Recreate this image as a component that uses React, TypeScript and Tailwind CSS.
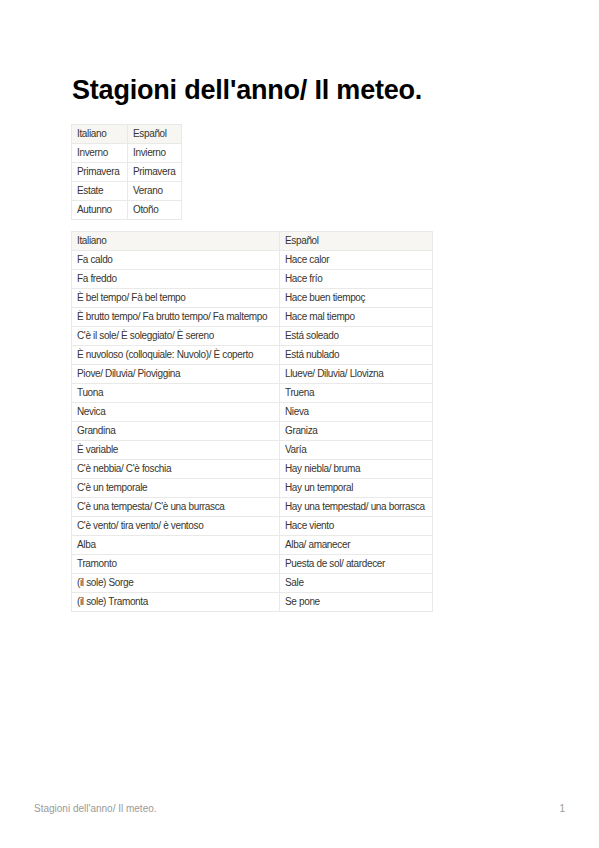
const seasons: [string, string][] = [
  ["Inverno", "Invierno"],
  ["Primavera", "Primavera"],
  ["Estate", "Verano"],
  ["Autunno", "Otoño"],
];

const weather: [string, string][] = [
  ["Fa caldo", "Hace calor"],
  ["Fa freddo", "Hace frío"],
  ["È bel tempo/ Fà bel tempo", "Hace buen tiempoç"],
  ["È brutto tempo/ Fa brutto tempo/ Fa maltempo", "Hace mal tiempo"],
  ["C'è il sole/ È soleggiato/ È sereno", "Está soleado"],
  ["È nuvoloso (colloquiale: Nuvolo)/ È coperto", "Está nublado"],
  ["Piove/ Diluvia/ Pioviggina", "Llueve/ Diluvia/ Llovizna"],
  ["Tuona", "Truena"],
  ["Nevica", "Nieva"],
  ["Grandina", "Graniza"],
  ["È variable", "Varía"],
  ["C'è nebbia/ C'è foschia", "Hay niebla/ bruma"],
  ["C'è un temporale", "Hay un temporal"],
  ["C'è una tempesta/ C'è una burrasca", "Hay una tempestad/ una borrasca"],
  ["C'è vento/ tira vento/ è ventoso", "Hace viento"],
  ["Alba", "Alba/ amanecer"],
  ["Tramonto", "Puesta de sol/ atardecer"],
  ["(il sole) Sorge", "Sale"],
  ["(il sole) Tramonta", "Se pone"],
];

function Table({
  rows,
  widths,
}: {
  rows: [string, string][];
  widths: [string, string];
}) {
  return (
    <table className="table-fixed border-collapse text-[10px] leading-none text-[#37352f] tracking-[-0.35px]">
      <thead>
        <tr className="bg-[#f7f6f3]">
          <th className={`${widths[0]} h-[19px] border border-[#e9e9e7] px-[5px] text-left font-normal`}>
            Italiano
          </th>
          <th className={`${widths[1]} h-[19px] border border-[#e9e9e7] px-[5px] text-left font-normal`}>
            Español
          </th>
        </tr>
      </thead>
      <tbody>
        {rows.map(([it, es]) => (
          <tr key={it}>
            <td className="h-[19px] border border-[#e9e9e7] px-[5px] whitespace-nowrap">{it}</td>
            <td className="h-[19px] border border-[#e9e9e7] px-[5px] whitespace-nowrap">{es}</td>
          </tr>
        ))}
      </tbody>
    </table>
  );
}

export default function App() {
  return (
    <div className="relative h-[848px] w-[599px] bg-white font-['Liberation_Sans',Arial,sans-serif]">
      <div className="flex flex-col pl-[71px] pt-[73px]">
        <h1 className="ml-[1px] text-[27px] font-bold leading-[35px] tracking-[-0.2px] text-black">
          Stagioni dell'anno/ Il meteo.
        </h1>
        <div className="mt-[16px]">
          <Table rows={seasons} widths={["w-[56px]", "w-[54px]"]} />
        </div>
        <div className="mt-[11px]">
          <Table rows={weather} widths={["w-[208px]", "w-[153px]"]} />
        </div>
      </div>
      <div className="absolute bottom-[32px] left-[34px] right-[34px] flex justify-between text-[10px] text-[#9b9a97]">
        <span>Stagioni dell'anno/ Il meteo.</span>
        <span>1</span>
      </div>
    </div>
  );
}
